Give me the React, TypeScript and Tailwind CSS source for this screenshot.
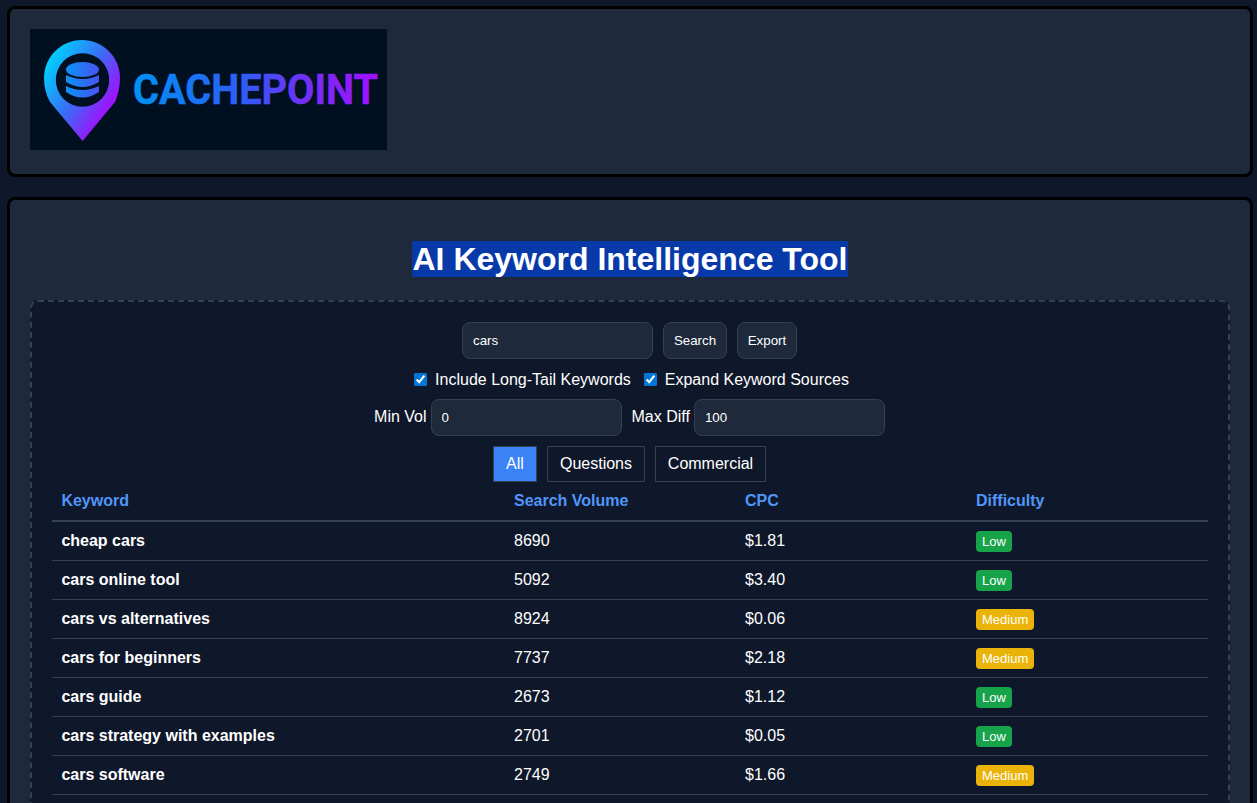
import React from "react";

const rows: [string, string, string, "Low" | "Medium"][] = [
  ["cheap cars", "8690", "$1.81", "Low"],
  ["cars online tool", "5092", "$3.40", "Low"],
  ["cars vs alternatives", "8924", "$0.06", "Medium"],
  ["cars for beginners", "7737", "$2.18", "Medium"],
  ["cars guide", "2673", "$1.12", "Low"],
  ["cars strategy with examples", "2701", "$0.05", "Low"],
  ["cars software", "2749", "$1.66", "Medium"],
];

function Logo() {
  return (
    <svg width="357" height="121" viewBox="0 0 357 121" className="block overflow-visible" role="img" aria-label="Cachepoint logo">
      <defs>
        <linearGradient id="pin" gradientUnits="userSpaceOnUse" x1="16" y1="35" x2="88" y2="78">
          <stop offset="0" stopColor="#00d0ff" />
          <stop offset="0.5" stopColor="#3a6cf5" />
          <stop offset="1" stopColor="#b400ff" />
        </linearGradient>
        <linearGradient id="db" gradientUnits="userSpaceOnUse" x1="36" y1="50" x2="70" y2="50">
          <stop offset="0" stopColor="#0a94f5" />
          <stop offset="1" stopColor="#4a50f0" />
        </linearGradient>
        <linearGradient id="word" gradientUnits="userSpaceOnUse" x1="103" y1="0" x2="348" y2="0">
          <stop offset="0" stopColor="#0092f2" />
          <stop offset="0.45" stopColor="#2f5cf5" />
          <stop offset="0.7" stopColor="#7030f5" />
          <stop offset="1" stopColor="#a310ff" />
        </linearGradient>
      </defs>
      <rect width="357" height="121" fill="#001021" />
      <path d="M52.6 112 L20 73 C16 66 14 58 14 49 C14 28 31 11 52 11 C73 11 90 28 90 49 C90 58 88 66 85 73 Z" fill="url(#pin)" />
      <circle cx="52.5" cy="51" r="26.7" fill="#001021" />
      <ellipse cx="52.5" cy="40.5" rx="16.5" ry="7.5" fill="url(#db)" />
      <path d="M36 46 Q52.5 54 69 46 L69 53 Q52.5 63 36 53 Z" fill="url(#db)" />
      <path d="M36 57 Q52.5 65 69 57 L69 63 Q52.5 74 36 63 Z" fill="url(#db)" />
      <text x="103" y="75" fontFamily="Roboto, sans-serif" fontWeight="700" fontSize="43" textLength="245" lengthAdjust="spacingAndGlyphs" fill="url(#word)" stroke="url(#word)" strokeWidth="0.5">CACHEPOINT</text>
    </svg>
  );
}

const inputCls = "w-[191px] h-[37px] rounded-lg border border-[#334155] bg-[#1e293b] px-[10px] text-[13.333px] text-white outline-none";
const btnCls = "h-[37px] rounded-lg border border-[#334155] bg-[#1e293b] text-[13.333px] text-white";
const cell = "px-[9.4px]";

export default function App() {
  return (
    <div className="h-[803px] overflow-hidden bg-[#0f172a] pt-[6px] pl-[7px] pr-[4px] font-['Liberation_Sans',Arial,sans-serif] text-base text-white">
      <header className="mb-5 h-[171px] rounded-lg border-[3px] border-black bg-[#1e293b] p-5">
        <Logo />
      </header>
      <main className="rounded-lg border-[3px] border-black bg-[#1e293b] p-5">
        <h1 className="my-[21px] text-center text-[32px] leading-[37px] font-bold">
          <span className="bg-[#0839a8]">AI Keyword Intelligence Tool</span>
        </h1>
        <section className="mt-[22px] rounded-lg border-2 border-dashed border-[#334155] bg-[#0f172a] p-5">
          <div className="mb-[10px] flex justify-center gap-[10px] pr-[1px]">
            <input className={inputCls} defaultValue="cars" aria-label="Keyword" />
            <button className={`${btnCls} w-[64px]`}>Search</button>
            <button className={`${btnCls} w-[60px]`}>Export</button>
          </div>
          <div className="mb-[10px] flex h-5 items-center justify-center gap-[13px] pl-[3px]">
            <label className="flex items-center gap-2">
              <input type="checkbox" defaultChecked className="accent-[#0075d8]" />
              <span className="pt-[2px]">Include Long-Tail Keywords</span>
            </label>
            <label className="flex items-center gap-2">
              <input type="checkbox" defaultChecked className="accent-[#0075d8]" />
              <span className="pt-[2px]">Expand Keyword Sources</span>
            </label>
          </div>
          <div className="mb-[10px] flex items-center justify-center gap-[10px] pr-[1px]">
            <label className="flex items-center gap-[4px]">
              <span className="pb-[2px]">Min Vol</span>
              <input type="number" className={inputCls} defaultValue="0" />
            </label>
            <label className="flex items-center gap-[4px]">
              <span className="pb-[2px]">Max Diff</span>
              <input type="number" className={inputCls} defaultValue="100" />
            </label>
          </div>
          <div className="flex justify-center gap-[10px] pr-[1px]">
            <button className="h-9 w-[44px] border border-[#334155] bg-[#3b82f6]">All</button>
            <button className="h-9 w-[98px] border border-[#334155]">Questions</button>
            <button className="h-9 w-[111px] border border-[#334155]">Commercial</button>
          </div>
          <table className="w-full table-fixed border-collapse">
            <thead>
              <tr className="h-[39px] border-b-2 border-[#334155] text-left font-bold text-[#5096f8]">
                <th className={`w-[452.6px] ${cell}`}>Keyword</th>
                <th className={`w-[231px] ${cell}`}>Search Volume</th>
                <th className={`w-[231px] ${cell}`}>CPC</th>
                <th className={cell}>Difficulty</th>
              </tr>
            </thead>
            <tbody>
              {rows.map(([k, v, c, d]) => (
                <tr key={k} className="h-[39px] border-b border-[#334155]">
                  <td className={`${cell} font-bold`}>{k}</td>
                  <td className={cell}>{v}</td>
                  <td className={cell}>{c}</td>
                  <td className={cell}>
                    <span className={d === "Low" ? "mt-[2px] block w-fit rounded-[4px] bg-[#16a34a] px-[6px] py-[3px] text-[13px] leading-[15px]" : "mt-[2px] block w-fit rounded-[4px] bg-[#eab308] px-[6px] py-[3px] text-[13px] leading-[15px]"}>{d}</span>
                  </td>
                </tr>
              ))}
            </tbody>
          </table>
        </section>
      </main>
    </div>
  );
}
